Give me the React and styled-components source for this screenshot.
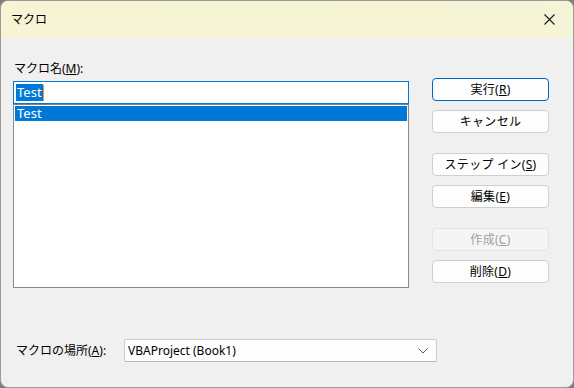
import React from "react";
import styled, { createGlobalStyle } from "styled-components";

const Global = createGlobalStyle`
  html, body {
    margin: 0;
    padding: 0;
    background: #7d7d7d;
  }
  body {
    font-family: "Noto Sans", "Noto Sans CJK JP", sans-serif;
    font-size: 12px;
    color: #000;
  }
`;

const Window = styled.div`
  width: 574px;
  height: 388px;
  box-sizing: border-box;
  border: 1px solid #9b9b9b;
  border-radius: 8px;
  overflow: hidden;
  background: #f0f0f0;
  display: flex;
  flex-direction: column;
`;

const TitleBar = styled.div`
  height: 37px;
  flex: none;
  display: flex;
  align-items: center;
  justify-content: space-between;
  padding: 0 18px 0 10px;
  background: linear-gradient(90deg, #f6f4d4 0%, #f4f3d3 40%, #f6f4d6 100%);
`;

const Title = styled.span`
  font-size: 12px;
  line-height: 16px;
`;

const Body = styled.div`
  flex: 1;
  display: flex;
  flex-direction: column;
  padding: 23px 24px 0 12px;
`;

const Main = styled.div`
  display: grid;
  grid-template-columns: 396px 117px;
  column-gap: 23px;
  align-items: start;
`;

const LeftCol = styled.div`
  display: flex;
  flex-direction: column;
`;

const Label = styled.label`
  display: block;
  line-height: 16px;
  margin: 0 0 4px 1px;
  white-space: nowrap;
`;

const NameInput = styled.div`
  height: 23px;
  box-sizing: border-box;
  border: 1px solid #0078d7;
  background: #fff;
  display: flex;
  align-items: center;
  padding-left: 2px;
`;

const Selected = styled.span`
  background: #0078d7;
  color: #fff;
  line-height: 17px;
  font-size: 13px;
  padding: 0 1px;
`;

const Caret = styled.span`
  width: 1px;
  height: 16px;
  background: #ff8a1f;
`;

const ListBox = styled.div`
  height: 184px;
  box-sizing: border-box;
  border: 1px solid #858a92;
  border-top-color: #7d8289;
  background: #fff;
  padding: 1px;
`;

const ListRow = styled.div`
  height: 15px;
  line-height: 15px;
  font-size: 13px;
  padding-left: 2px;
  background: ${(p) => (p.$active ? "#0078d7" : "transparent")};
  color: ${(p) => (p.$active ? "#fff" : "#000")};
`;

const Buttons = styled.div`
  display: flex;
  flex-direction: column;
  padding-top: 17px;
`;

const Button = styled.button`
  height: 23px;
  width: 117px;
  box-sizing: border-box;
  margin: 0 0 ${(p) => (p.$groupEnd ? "20px" : "9px")} 0;
  border: 1px solid ${(p) => (p.$default ? "#0067c0" : p.disabled ? "#e4e4e4" : "#cfcfcf")};
  border-radius: 4px;
  background: ${(p) => (p.disabled ? "#f5f5f5" : "#fdfdfd")};
  color: ${(p) => (p.disabled ? "#a0a0a0" : "#000")};
  font-family: inherit;
  font-size: 12px;
  line-height: 16px;
  letter-spacing: 0.3px;
  padding: 0;
  text-align: center;
`;

const BottomRow = styled.div`
  display: flex;
  align-items: center;
  margin-top: 47px;
  padding-left: 3px;
`;

const BottomLabel = styled.label`
  width: 108px;
  line-height: 16px;
  white-space: nowrap;
`;

const Select = styled.div`
  width: 313px;
  height: 23px;
  box-sizing: border-box;
  border: 1px solid #cbcbcb;
  border-bottom-color: #b8b8b8;
  border-radius: 2px;
  background: #fdfdfd;
  display: flex;
  align-items: center;
  justify-content: space-between;
  padding: 0 8px 0 3px;
  font-size: 12px;
`;

const Chevron = () => (
  <svg width="10" height="6" viewBox="0 0 10 6">
    <path d="M0.5 0.5 L5 5 L9.5 0.5" fill="none" stroke="#555" strokeWidth="1" />
  </svg>
);

const CloseIcon = () => (
  <svg width="11" height="11" viewBox="0 0 11 11">
    <path d="M0.5 0.5 L10.5 10.5 M10.5 0.5 L0.5 10.5" stroke="#1a1a1a" strokeWidth="1.1" />
  </svg>
);

export default function App() {
  return (
    <>
      <Global />
      <Window>
        <TitleBar>
          <Title>マクロ</Title>
          <CloseIcon />
        </TitleBar>
        <Body>
          <Main>
            <LeftCol>
              <Label>
                マクロ名(<u>M</u>):
              </Label>
              <NameInput>
                <Selected>Test</Selected>
                <Caret />
              </NameInput>
              <ListBox>
                <ListRow $active>Test</ListRow>
              </ListBox>
            </LeftCol>
            <Buttons>
              <Button $default>
                実行(<u>R</u>)
              </Button>
              <Button $groupEnd>キャンセル</Button>
              <Button>
                ステップ イン(<u>S</u>)
              </Button>
              <Button $groupEnd>
                編集(<u>E</u>)
              </Button>
              <Button disabled>
                作成(<u>C</u>)
              </Button>
              <Button>
                削除(<u>D</u>)
              </Button>
            </Buttons>
          </Main>
          <BottomRow>
            <BottomLabel>
              マクロの場所(<u>A</u>):
            </BottomLabel>
            <Select>
              <span>VBAProject (Book1)</span>
              <Chevron />
            </Select>
          </BottomRow>
        </Body>
      </Window>
    </>
  );
}
